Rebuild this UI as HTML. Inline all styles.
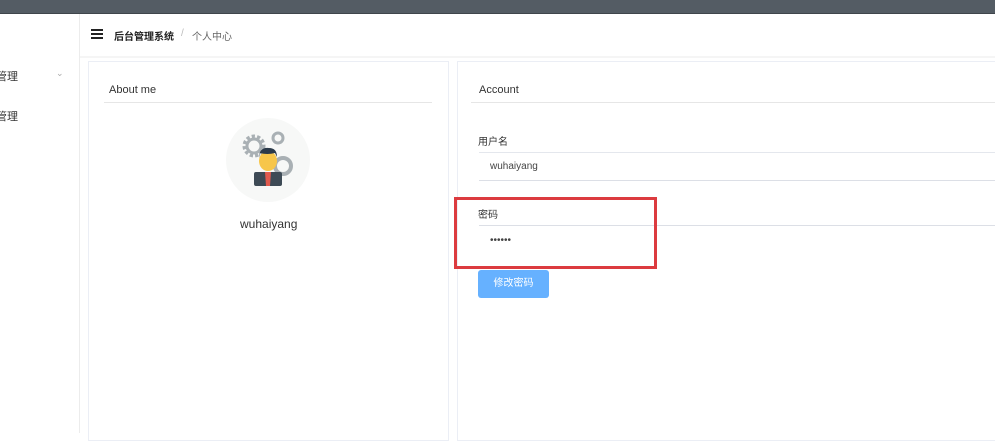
<!DOCTYPE html>
<html><head><meta charset="utf-8"><style>
*{margin:0;padding:0;box-sizing:border-box}
body{width:995px;height:433px;overflow:hidden;background:#fff;font-family:"Liberation Sans","Noto Sans CJK SC",sans-serif;position:relative;color:#303133}
.abs{position:absolute}
</style></head><body>
<div class="abs" style="left:0;top:0;width:995px;height:14px;background:#545c64;border-bottom:1px solid #3f454b"></div>
<div class="abs" style="left:79px;top:14px;width:1px;height:419px;background:#ececec"></div>
<div class="abs" style="left:-4px;top:68px;font-size:11px;color:#333">管理</div>
<div class="abs" style="left:56px;top:68px;font-size:9px;color:#aaa">⌄</div>
<div class="abs" style="left:-4px;top:108px;font-size:11px;color:#333">管理</div>
<!-- header -->
<div class="abs" style="left:91px;top:29px;width:12px;height:2px;background:#222;box-shadow:0 4px 0 #222,0 8px 0 #222"></div>
<div class="abs" style="left:114px;top:28px;font-size:10px;color:#222;font-weight:bold">后台管理系统</div>
<div class="abs" style="left:181px;top:28px;font-size:10px;color:#bbb">/</div>
<div class="abs" style="left:192px;top:28px;font-size:10px;color:#666">个人中心</div>
<div class="abs" style="left:80px;top:56px;width:915px;height:2px;background:#f5f5f5"></div>
<!-- left card -->
<div class="abs" style="left:88px;top:61px;width:361px;height:380px;border:1px solid #ebeef5"></div>
<div class="abs" style="left:109px;top:84px;font-size:11px;color:#333">About me</div>
<div class="abs" style="left:104px;top:102px;width:328px;height:1px;background:#e6e6e6"></div>
<div class="abs" style="left:226px;top:118px;width:84px;height:84px;border-radius:50%;background:#f7f8f7"></div>
<svg class="abs" style="left:236px;top:128px" width="64" height="64" viewBox="0 0 64 64">
<circle cx="18" cy="18" r="9" fill="none" stroke="#a9b0b4" stroke-width="5" stroke-dasharray="3 2"/>
<circle cx="18" cy="18" r="7" fill="none" stroke="#a9b0b4" stroke-width="3"/>
<circle cx="42" cy="10" r="5" fill="none" stroke="#a9b0b4" stroke-width="3"/>
<circle cx="47" cy="38" r="8" fill="none" stroke="#a9b0b4" stroke-width="4"/>
<rect x="18" y="44" width="28" height="14" rx="2" fill="#3d4a55"/>
<path d="M29 44h6l-1 14h-4z" fill="#e05a4e"/>
<ellipse cx="32" cy="33" rx="9" ry="10" fill="#f7c64a"/>
<path d="M23 30q0-11 10-10q8 0 8 9l-2-4q-8 2-15 0z" fill="#2b3a4a"/>
</svg>
<div class="abs" style="left:240px;top:217px;font-size:12px;color:#333">wuhaiyang</div>
<!-- right card -->
<div class="abs" style="left:457px;top:61px;width:545px;height:380px;border:1px solid #ebeef5"></div>
<div class="abs" style="left:479px;top:84px;font-size:11px;color:#333">Account</div>
<div class="abs" style="left:471px;top:102px;width:530px;height:1px;background:#e6e6e6"></div>
<div class="abs" style="left:478px;top:133px;font-size:10px;color:#333">用户名</div>
<div class="abs" style="left:479px;top:152px;width:520px;height:29px;border-top:1px solid #e4e7ed;border-bottom:1px solid #dcdfe6"></div>
<div class="abs" style="left:490px;top:161px;font-size:10px;color:#444">wuhaiyang</div>
<div class="abs" style="left:478px;top:206px;font-size:10px;color:#333">密码</div>
<div class="abs" style="left:479px;top:225px;width:520px;height:1px;background:#dcdfe6"></div>
<div class="abs" style="left:490px;top:235px;font-size:10px;color:#444">••••••</div>
<div class="abs" style="left:454px;top:197px;width:203px;height:72px;border:3px solid #dc3b3f"></div>
<div class="abs" style="left:478px;top:270px;width:71px;height:28px;background:#66b1ff;border-radius:3px;color:#fff;font-size:10px;text-align:center;line-height:28px">修改密码</div>
</body></html>
